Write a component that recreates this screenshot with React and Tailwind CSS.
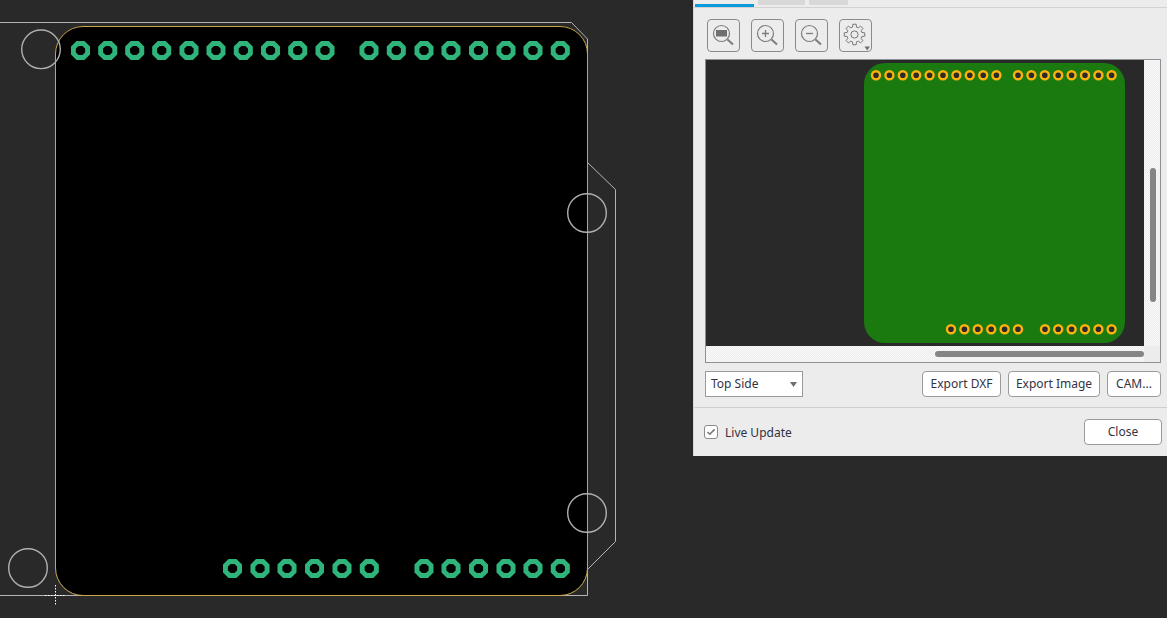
const topA = [80.5, 107.7, 134.7, 161.7, 189, 216, 243.3, 270.5, 297.7, 325];
const topB = [369, 396.3, 424, 451, 478.5, 506, 533, 560.3];
const botA = [232.5, 260, 287, 314.5, 342, 369.3];
const botB = [424, 451, 478.5, 506, 533, 560.3];

const octagon = (cx, cy, r) =>
  Array.from({ length: 8 }, (_, i) => {
    const a = Math.PI / 8 + (i * Math.PI) / 4;
    return `${(cx + r * Math.cos(a)).toFixed(2)},${(cy + r * Math.sin(a)).toFixed(2)}`;
  }).join(" ");

function Pad({ x, y }) {
  return (
    <g>
      <polygon points={octagon(x, y, 10.3)} fill="#2fb47c" />
      <polygon points={octagon(x, y, 5)} fill="#000" />
    </g>
  );
}

function BoardCanvas() {
  const white = "#b4b4b4";
  const gold = "#c8a64a";
  return (
    <svg width="693" height="618" viewBox="0 0 693 618" className="block shrink-0">
      <path d="M83 26 H560 A27 27 0 0 1 587 53 V568 A27 27 0 0 1 560 595 H83 A27 27 0 0 1 56 568 V53 A27 27 0 0 1 83 26 Z" fill="#000" />
      <path
        d="M0 22.5 H571.5 L587.5 39 V163 M588 163 L615.5 189.5 V541.5 L587.5 569.5 V595.5 H0"
        fill="none"
        stroke={white}
        strokeWidth="1"
      />
      <path
        d="M83 26.5 H560 A27.5 27.5 0 0 1 587.5 54 V568 A27.5 27.5 0 0 1 560 595.5 H83 A27.5 27.5 0 0 1 55.5 568 V54 A27.5 27.5 0 0 1 83 26.5 Z"
        fill="none"
        stroke={gold}
        strokeWidth="1"
      />
      <path d="M60 595.5 H46" stroke="#b4b4b4" strokeWidth="1" />
      {[[41, 49.3], [587, 213], [587, 513], [28, 568]].map(([cx, cy]) => (
        <circle key={cx + "-" + cy} cx={cx} cy={cy} r="19.3" fill="none" stroke="#b0b0b0" strokeWidth="1.4" />
      ))}
      {[...topA, ...topB].map((x) => (
        <Pad key={"t" + x} x={x} y={50.5} />
      ))}
      {[...botA, ...botB].map((x) => (
        <Pad key={"b" + x} x={x} y={568.5} />
      ))}
      <path d="M45 595.5 H66" stroke="#fff" strokeWidth="1" strokeDasharray="1.5 1.5" />
      <path d="M55.5 585 V606" stroke="#fff" strokeWidth="1" strokeDasharray="1.5 1.5" />
    </svg>
  );
}

const pxTop = [876, 889.4, 902.8, 916.2, 929.6, 943, 956.4, 969.8, 983.2, 996.4, 1018, 1031.4, 1044.8, 1058.2, 1071.6, 1085, 1098.4, 1111.6];
const pxBot = [951, 964.4, 977.8, 991.2, 1004.6, 1018, 1045, 1058.2, 1071.6, 1085, 1098.4, 1111.6];

function Preview() {
  return (
    <svg width="438" height="286" viewBox="706 60 438 286" className="block">
      <rect x="864" y="63" width="261" height="280" rx="21" fill="#1a7a0f" />
      {pxTop.map((x) => (
        <circle key={"t" + x} cx={x} cy={75.3} r="4" fill="#2a2a2a" stroke="#fdb20d" strokeWidth="2.4" />
      ))}
      {pxBot.map((x) => (
        <circle key={"b" + x} cx={x} cy={329.3} r="4" fill="#2a2a2a" stroke="#fdb20d" strokeWidth="2.4" />
      ))}
    </svg>
  );
}

function ToolButton({ children }) {
  return (
    <button className="w-[33px] h-[33px] rounded-[4px] border border-[#8a8a8a] bg-[#ececec] p-0 block">
      <svg width="31" height="31" viewBox="1 1 31 31" className="block">
        {children}
      </svg>
    </button>
  );
}

function Lens() {
  return (
    <>
      <circle cx="14.5" cy="14.5" r="8" fill="none" stroke="#7c7c7c" strokeWidth="1.2" />
      <path d="M20.5 20.5 L26 25.5" stroke="#7c7c7c" strokeWidth="2" />
    </>
  );
}

const gearPath = (() => {
  const cx = 15.5, cy = 15.5, pts = [];
  for (let i = 0; i < 8; i++) {
    const a = (i * Math.PI) / 4 - Math.PI / 2;
    const s = 0.2, g = 0.27;
    const p = (r, t) => `${(cx + r * Math.cos(t)).toFixed(2)} ${(cy + r * Math.sin(t)).toFixed(2)}`;
    pts.push(p(7.6, a - g), p(10.4, a - s * 0.8), p(10.4, a + s * 0.8), p(7.6, a + g));
  }
  return "M" + pts.join(" L") + " Z";
})();

function FlatButton({ className, children }) {
  return (
    <button className={"h-[26px] rounded-[4px] border border-[#9a9a9a] bg-white text-[12px] text-[#33333f] " + className}>
      {children}
    </button>
  );
}

export default function App() {
  return (
    <div className="w-[1167px] h-[618px] overflow-hidden bg-[#292929] flex items-start font-['Noto_Sans',sans-serif]">
      <BoardCanvas />
      <div className="w-[474px] h-[456px] shrink-0 bg-[#ececec] border-l border-[#d8d8d8] flex flex-col">
        <div className="h-[8px] shrink-0 border-b border-[#d2d2d2] flex items-start pl-px">
          <div className="w-[59px] h-[7px] flex flex-col">
            <div className="h-[4px]" />
            <div className="h-[3px] bg-[#0a9ade]" />
          </div>
          <div className="w-[47px] h-[5px] ml-1 bg-[#d8d8d8]" />
          <div className="w-[39px] h-[5px] ml-1 bg-[#d8d8d8]" />
        </div>

        <div className="h-[51px] shrink-0 pt-[11px] pl-[13px] flex items-start gap-[11px]">
          <ToolButton>
            <Lens />
            <rect x="9" y="11" width="11" height="6.5" fill="#6f6f6f" />
          </ToolButton>
          <ToolButton>
            <Lens />
            <path d="M11 14.5 H18 M14.5 11 V18" stroke="#7c7c7c" strokeWidth="1.3" />
          </ToolButton>
          <ToolButton>
            <Lens />
            <path d="M11 14.5 H18" stroke="#7c7c7c" strokeWidth="1.3" />
          </ToolButton>
          <ToolButton>
            <path d={gearPath} fill="none" stroke="#777" strokeWidth="1" />
            <circle cx="15.5" cy="15.5" r="3.6" fill="none" stroke="#777" strokeWidth="1" />
            <path d="M25.5 27.5 H31 L28.2 31.5 Z" fill="#6f6f6f" />
          </ToolButton>
        </div>

        <div className="mx-[11px] w-[456px] h-[304px] shrink-0 border border-[#8b8f96] grid grid-cols-[438px_16px] grid-rows-[286px_16px]">
          <div className="bg-[#292929]">
            <Preview />
          </div>
          <div className="bg-[repeating-conic-gradient(#ececec_0_25%,#fafafa_0_50%)] bg-[length:2px_2px] flex justify-center pt-[108px] pl-[2px]">
            <div className="w-[6px] h-[134px] rounded-full bg-[#858585]" />
          </div>
          <div className="bg-[repeating-conic-gradient(#ececec_0_25%,#fafafa_0_50%)] bg-[length:2px_2px] pl-[229px] pt-[5px]">
            <div className="w-[209px] h-[6px] rounded-full bg-[#858585]" />
          </div>
          <div className="bg-[#ececec]" />
        </div>

        <div className="h-[45px] shrink-0 border-b border-[#cfcfcf] pt-[8px] pl-[11px] pr-[6px] flex items-start">
          <div className="w-[98px] h-[26px] border border-[#9a9a9a] bg-white flex items-center justify-between pl-[5px] pr-[5px] text-[12px] text-[#33333f]">
            <span>Top Side</span>
            <svg width="7" height="5" viewBox="0 0 7 5"><path d="M0 0 H7 L3.5 5 Z" fill="#6f6f6f" /></svg>
          </div>
          <div className="flex-1" />
          <FlatButton className="w-[79px] mr-[7px]">Export DXF</FlatButton>
          <FlatButton className="w-[92px] mr-[7px]">Export Image</FlatButton>
          <FlatButton className="w-[54px]">CAM...</FlatButton>
        </div>

        <div className="flex-1 pl-[10px] pr-[5px] pt-[11px] flex items-start">
          <div className="mt-[6px] w-[14px] h-[14px] rounded-[3px] border border-[#8a8a8a] bg-white flex items-center justify-center">
            <svg width="10" height="8" viewBox="0 0 11 9">
              <path d="M1.5 4.5 L4.2 7 L9.5 1.5" fill="none" stroke="#777" strokeWidth="1.8" />
            </svg>
          </div>
          <span className="ml-[7px] mt-[6px] text-[12px] leading-[16px] text-[#33333f]">Live Update</span>
          <div className="flex-1" />
          <FlatButton className="w-[78px]">Close</FlatButton>
        </div>
      </div>
    </div>
  );
}
